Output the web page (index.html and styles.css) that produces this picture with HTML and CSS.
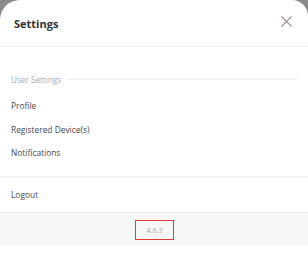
FILE: index.html
```html
<!DOCTYPE html>
<html>
<head>
<meta charset="utf-8">
<link rel="stylesheet" href="styles.css">
</head>
<body>
<div class="modal">
  <div class="header">
    <div class="title">Settings</div>
    <svg class="close" width="11" height="11" viewBox="0 0 11 11">
      <path d="M0.5 0.5 L10.5 10.5 M10.5 0.5 L0.5 10.5" stroke="#9a8d8d" stroke-width="1.1" fill="none"/>
    </svg>
  </div>
  <div class="section">
    <div class="label"><span>User Settings</span><div class="rule"></div></div>
    <div class="item">Profile</div>
    <div class="item">Registered Device(s)</div>
    <div class="item">Notifications</div>
  </div>
  <div class="logout">Logout</div>
  <div class="footer"><div class="version">4.6.3</div></div>
</div>
</body>
</html>
```
FILE: styles.css
```css
html, body {
  margin: 0;
  padding: 0;
  background: #8a8a8a;
  height: 100%;
}
body {
  font-family: "Open Sans", "Liberation Sans", sans-serif;
}
.modal {
  background: #fff;
  height: 253px;
  border-radius: 20px 16px 0 0;
  overflow: hidden;
}
.header {
  height: 46px;
  display: flex;
  justify-content: space-between;
  align-items: center;
  padding: 0 16px 0 14px;
  border-bottom: 1px solid #eeeeee;
}
.title {
  font-size: 11px;
  font-weight: 700;
  color: #333;
}
.close {
  align-self: flex-start;
  margin-top: 16px;
}
.section {
  padding: 23px 11px 0 11px;
  height: 106px;
  border-bottom: 1px solid #ececec;
}
.label {
  display: flex;
  align-items: center;
  height: 18px;
  font-size: 8.2px;
  color: #a9a9a9;
  margin-bottom: 6px;
}
.label .rule {
  flex: 1;
  height: 1px;
  background: #ececec;
  margin: 0 0 0 7px;
}
.item {
  height: 23.5px;
  line-height: 23.5px;
  font-size: 8.4px;
  color: #4a4a4a;
}
.logout {
  height: 35px;
  line-height: 35px;
  padding-left: 11px;
  font-size: 8.4px;
  color: #4a4a4a;
}
.footer {
  height: 32px;
  background: #f7f7f7;
  border-top: 1px solid #ebebeb;
  display: flex;
  justify-content: center;
  align-items: center;
}
.version {
  width: 37px;
  height: 18px;
  border: 1px solid #e53935;
  margin-top: 2px;
  margin-left: 1px;
  font-size: 7.2px;
  color: #aaa;
  text-align: center;
  line-height: 18px;
}
```
